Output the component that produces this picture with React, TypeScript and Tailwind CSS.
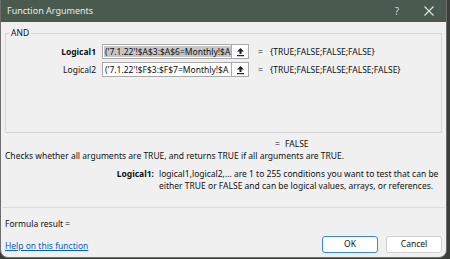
import React from "react";

const font = { fontFamily: '"Noto Sans", "Segoe UI", sans-serif' };

function UpIcon() {
  return (
    <svg width="9" height="10" viewBox="0 0 9 10">
      <path d="M4.5 1 L8 4.5 L5.5 4.5 L5.5 7 L3.5 7 L3.5 4.5 L1 4.5 Z" fill="#222" />
      <rect x="1" y="8" width="7" height="1.2" fill="#222" />
    </svg>
  );
}

function ArgRow({ label, bold, value, result, selected }: { label: string; bold?: boolean; value: string; result: string; selected?: boolean }) {
  return (
    <div className="flex items-center h-[15px] leading-[12px]">
      <div className={`w-[91px] text-right pr-[1px] ${bold ? "font-bold" : ""}`}>{label}</div>
      <div className="ml-[5px] w-[130px] h-[15px] bg-white border border-[#a9a9a9] flex items-center pl-[1px] overflow-hidden whitespace-nowrap">
        <span className={`leading-[11px] px-[1px] ${selected ? "bg-[#c6c6c6]" : ""}`}>{value}</span>
      </div>
      <div className="w-[17px] h-[15px] bg-white border border-[#a9a9a9] border-l-0 flex items-center justify-center">
        <UpIcon />
      </div>
      <div className="ml-[9px] w-[12px]">=</div>
      <div className="whitespace-nowrap">{result}</div>
    </div>
  );
}

export default function App() {
  return (
    <div className="w-[450px] h-[259px] bg-[#3a3d3a] overflow-hidden text-[8.5px] text-[#111]" style={font}>
      <div className="w-[447px] h-[258px] bg-[#f0f0f0] flex flex-col rounded-b-[8px] overflow-hidden border-l border-r border-b border-[#6e6e6e]">
        <div className="h-[22px] shrink-0 bg-[#4b5a4f] flex items-center pl-[6px] text-[#e6ebe6] text-[9px]">
          <span className="flex-1">Function Arguments</span>
          <span className="w-[30px] text-center text-[10px] text-[#cfd6cf]">?</span>
          <span className="w-[34px] flex justify-center">
            <svg width="10" height="10" viewBox="0 0 10 10">
              <path d="M0.5 0.5 L9.5 9.5 M9.5 0.5 L0.5 9.5" stroke="#dfe4df" strokeWidth="1.1" />
            </svg>
          </span>
        </div>
        <div className="flex-1 flex flex-col px-[4px]">
          <fieldset className="mt-[5px] h-[106px] border border-[#d6d6d6] px-[0px] pt-[5px] flex flex-col gap-[3px]">
            <legend className="ml-[3px] px-[2px] leading-[12px]">AND</legend>
            <ArgRow label="Logical1" bold selected value="('7.1.22'!$A$3:$A$6=Monthly!$A" result="{TRUE;FALSE;FALSE;FALSE}" />
            <ArgRow label="Logical2" value="('7.1.22'!$F$3:$F$7=Monthly!$A" result="{TRUE;FALSE;FALSE;FALSE;FALSE}" />
          </fieldset>
          <div className="mt-[5px] h-[12px] leading-[12px] flex pl-[270px]">
            <span className="w-[10px]">=</span>
            <span>FALSE</span>
          </div>
          <div className="h-[12px] leading-[12px] whitespace-nowrap">
            Checks whether all arguments are TRUE, and returns TRUE if all arguments are TRUE.
          </div>
          <div className="mt-[6px] flex leading-[12px]">
            <div className="w-[154px] text-right font-bold pr-[5px]">Logical1:</div>
            <div className="flex-1">
              <div className="whitespace-nowrap">logical1,logical2,... are 1 to 255 conditions you want to test that can be</div>
              <div className="whitespace-nowrap">either TRUE or FALSE and can be logical values, arrays, or references.</div>
            </div>
          </div>
          <div className="mt-[15px] h-px bg-[#dcdcdc] -mx-[3px]" />
          <div className="mt-[10px] leading-[12px]">Formula result =</div>
          <div className="flex items-center mt-[6px]">
            <a className="flex-1 text-[#0a5fc4] underline leading-[12px] mt-[3px]">Help on this function</a>
            <button className="w-[56px] h-[17px] bg-white border border-[#3b86d6] rounded-[3px] text-[8.5px] leading-none">OK</button>
            <button className="ml-[8px] w-[56px] h-[17px] bg-white border border-[#cfcfcf] rounded-[3px] text-[8.5px] leading-none">Cancel</button>
          </div>
        </div>
      </div>
    </div>
  );
}
